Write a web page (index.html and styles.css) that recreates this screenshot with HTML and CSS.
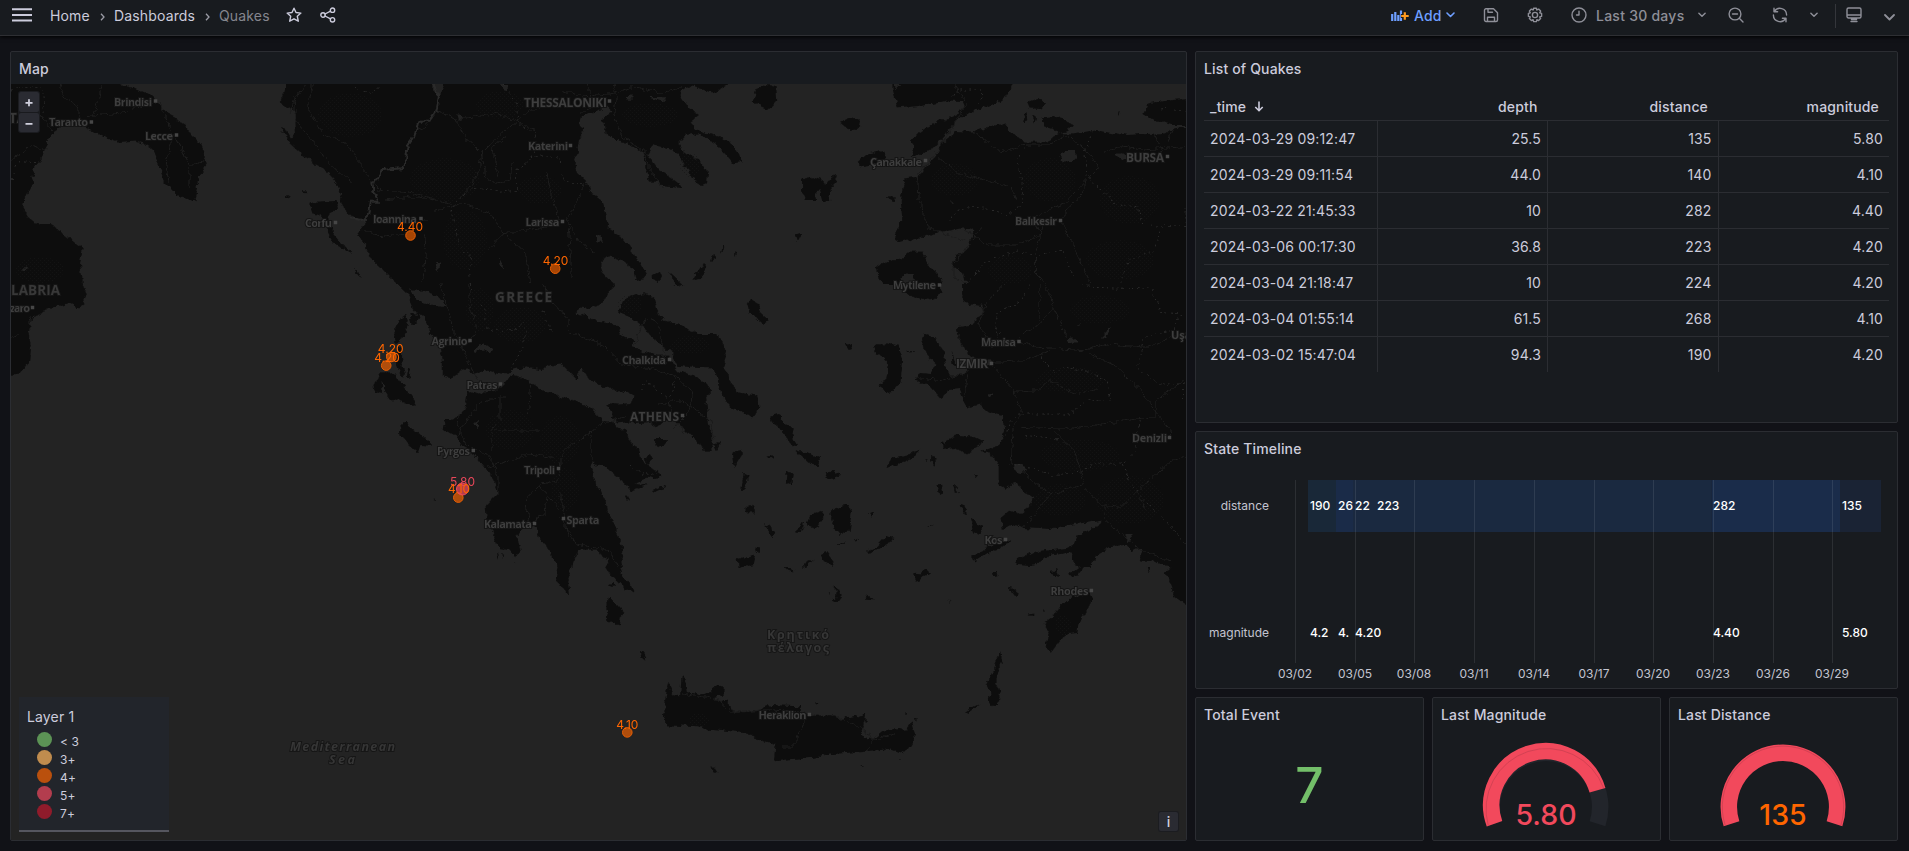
FILE: index.html
```html
<!DOCTYPE html>
<html lang="en">
<head>
<meta charset="utf-8">
<title>Quakes - Dashboards</title>
<link rel="stylesheet" href="styles.css">
</head>
<body>
<header class="topbar">
  <svg class="burger" width="20" height="14" viewBox="0 0 20 14"><path d="M0 1.2h20M0 7h20M0 12.5h20" stroke="currentColor" stroke-width="2"/></svg>
  <nav class="crumbs">
    <span class="c-home">Home</span><svg class="sep" width="5" height="8" viewBox="0 0 5 8"><path d="M1 .8 4 4 1 7.2"/></svg>
    <span class="c-dash">Dashboards</span><svg class="sep" width="5" height="8" viewBox="0 0 5 8"><path d="M1 .8 4 4 1 7.2"/></svg>
    <span class="current">Quakes</span>
  </nav>
  <svg class="ic star" width="16" height="16" viewBox="0 0 16 16"><path d="m8 1.2 2 4.3 4.9.6-3.6 3.2 1 4.9L8 11.8l-4.300 2.400 1-4.900L1.100 6.100 6 5.500z"/></svg>
  <svg class="ic share" width="16" height="16" viewBox="0 0 16 16"><circle cx="3" cy="8" r="2.200"/><circle cx="12.500" cy="3.200" r="2.200"/><circle cx="12.500" cy="12.800" r="2.200"/><path d="m5 7 5.500-2.800M5 9l5.500 2.800"/></svg>
  <div class="tools">
    <svg class="addicon" width="18" height="14" viewBox="0 0 18 14"><path d="M1.200 5v7M4.300 3v9M7.300 6v6M10 1.500V12" stroke="#6e9fff" stroke-width="2.200" fill="none"/><path d="M13.800 3v8M9.800 7h8" stroke="#181b1f" stroke-width="4"/><path d="M13.800 3.200v7.600M10.200 7h7.500" stroke="#ff9a1f" stroke-width="2.200"/></svg>
    <span class="add">Add</span>
    <svg class="chev blue" width="9" height="6" viewBox="0 0 9 6"><path d="m1 1 3.500 3.500L8 1"/></svg>
    <svg class="ic save" width="16" height="16" viewBox="0 0 16 16"><path d="M1.500 3.200a1.500 1.500 0 0 1 1.500-1.500h7.500l4 4v7.300a1.500 1.500 0 0 1-1.500 1.500H3A1.500 1.500 0 0 1 1.500 13zM4.500 14.500V10.200h7v4.300M5 1.700v3.500h4.500"/></svg>
    <svg class="ic gear" width="16" height="16" viewBox="0 0 16 16"><circle cx="8" cy="8" r="2.600"/><path d="m6.600 1.200h2.800l.5 1.800 1.700-.9 2 2-.9 1.700 1.900.6v2.900l-1.900.6.9 1.700-2 2-1.700-.9-.5 1.900H6.600l-.5-1.900-1.700.9-2-2 .9-1.700-1.900-.6V6.400l1.900-.6-.9-1.700 2-2 1.700.9z"/></svg>
    <svg class="ic clock" width="16" height="16" viewBox="0 0 16 16"><circle cx="8" cy="8" r="7"/><path d="M8 4.200V8H5.500"/></svg>
    <span class="range">Last 30 days</span>
    <svg class="chev c2" width="8" height="6" viewBox="0 0 9 6"><path d="m1 1 3.500 3.500L8 1"/></svg>
    <svg class="ic zoomout" width="16" height="16" viewBox="0 0 16 16"><circle cx="7" cy="7" r="5.900"/><path d="M4.500 7h5M11.300 11.300l3.700 3.700"/></svg>
    <svg class="ic refresh" width="16" height="16" viewBox="0 0 16 16"><path d="M2 1.200v3.600h3.600M2.300 4.600A6.600 6.600 0 0 1 14.600 8M14 14.800v-3.600h-3.600M13.700 11.400A6.600 6.600 0 0 1 1.400 8"/></svg>
    <svg class="chev c3" width="8" height="6" viewBox="0 0 9 6"><path d="m1 1 3.500 3.500L8 1"/></svg>
    <i class="divider"></i>
    <svg class="ic monitor" width="16" height="16" viewBox="0 0 16 16"><path d="M2.500 1h11a1.500 1.500 0 0 1 1.500 1.500v7a1.500 1.500 0 0 1-1.500 1.500h-11A1.500 1.500 0 0 1 1 9.500v-7A1.500 1.500 0 0 1 2.500 1zM1 8h14M5.500 11v1.500h5V11M5 14.500h6"/></svg>
    <svg class="chev c4" width="11" height="7" viewBox="0 0 11 7"><path d="m1 1 4.500 4.500L10 1"/></svg>
  </div>
</header>

<main class="dash">
  <section class="panel map-panel">
    <h2>Map</h2>
    <div class="map">
      <svg class="geo" viewBox="11 84 1175 756">
        <defs>
          <filter id="coast" filterUnits="userSpaceOnUse" x="0" y="70" width="1200" height="780">
            <feTurbulence type="fractalNoise" baseFrequency="0.16" numOctaves="2" seed="4"/>
            <feDisplacementMap in="SourceGraphic" scale="6" xChannelSelector="R" yChannelSelector="G"/>
          </filter>
          <pattern id="woods" width="4" height="4" patternUnits="userSpaceOnUse"><path d="M0 0h1v1H0zM2 2h1v1H2z" fill="#171717"/></pattern>
        </defs>
        <g filter="url(#coast)">
          <!-- north-west: Puglia, Albania, Epirus, Thessaly -->
          <svg x="0" y="0" width="560" height="284" viewBox="0 0 1372 852" preserveAspectRatio="none">
            <g class="land">
              <path d="M-20 220H260L298 252 330 268 362 280 385 305 400 330 430 355 455 378 470 405 490 430 497 460 506 490 497 515 488 530 482 560 476 604 462 598 440 590 420 565 400 540 395 515 385 480 378 450 360 432 330 425 290 428 262 410 225 395 205 380 150 380 130 398 115 430 100 480 84 500 80 530 84 550 62 590 54 612 66 650 84 670 122 672 160 705 202 748 196 790 200 852H-20z"/>
              <path d="M700 220V252L697 280 688 300 700 325 718 320 724 350 725 400 714 415 700 390 686 385 700 405 712 430 740 462 770 490 800 515 820 540 838 580 835 605 850 640 870 655 895 662 885 690 878 705 895 735 905 770 935 805 955 830 975 852H1380V220z"/>
              <path d="M760 612 775 605 825 603 828 625 808 640 803 655 815 690 818 705 840 735 865 758 845 750 815 728 805 700 800 670 785 645 765 640zM698 586l8-4 6 5-6 5zM742 574h8l-2 6zM868 806l8 8 10 20-12-12z"/>
            </g>
            <path class="sea" d="M1060 252h28l-5 22-12 15-13-20zM1118 340l15 2-2 18-9-2zM1225 252h20l-3 25-10-5zM50 810l15-8 5 5-18 10zM1065 790l12-8-4 40zM1222 770l12 20 1 15-8-10z"/>
            <g class="road">
              <path d="M150 252 155 290 190 320 192 350M250 252l-10 50-15 50M390 305l35 105-20 80 10 60M430 410l35 85 35-10M465 495v70M210 350l80-10 90-32M130 390l-30-40-40-10-10-60M27 480l50-40 40 10M720 290l5 70 40 60 40 70 60 60M750 252l-30 50-10 40M765 252l-10 80 35 70 60 30 60 110 25 30"/>
              <path d="M1075 330l-40 60-15-10M1075 330l40 30 30 60 35 40-5 50-30 60-35 50-50 15M1180 460l50-60 70-70 75-20M1180 460l10 70 20 20 40-10 5-50M1110 620l30-10 60 30 35 60 110-20M1235 700l-40 50M1235 700l55 60 10 90M890 690l40 20 60-10 20-30 40-10M1040 700l5 60-10 90M1110 360l110-20 90 50M920 570l80 5 60 20M1340 520l10 60 20 80M940 600l80-10 90 20M1240 410l-35 30 15 90"/>
            </g>
            <g class="prov"><path d="M27 270 40 262 100 262 108 290 105 350 118 370M30 540l15-55 45 3M860 252l20 20 30 5 30-22M1235 252l30 60 5 60 40 25 0 60-20 30-25 20v70l-50-5-60-8-35 40-15 30 20 100 30 40-5 70M1300 470l60 0 30 40 20 40"/></g>
            <path class="border" d="M1060 252 1075 290 1070 330 1050 365 1025 365 1015 410 998 440 995 480 985 505 935 510 925 540 912 545 915 575 928 605 908 605 905 640 890 660 860 655"/>
          </svg>
          <!-- north-east: Chalkidiki, Thrace, Marmara, Lesbos -->
          <svg x="560" y="0" width="640" height="284" viewBox="0 0 1568 852" preserveAspectRatio="none">
            <g class="land">
              <path d="M0 220H440L412 252 395 268 372 277 350 270 325 255 298 270 295 290 315 320 340 345 320 365 330 385 362 402 385 408 415 425 440 465 445 487 425 490 400 455 382 435 360 415 340 403 305 408 292 425 300 452 325 468 345 485 362 520 360 550 345 555 322 535 315 510 300 485 290 460 270 445 230 437 213 462 240 505 280 540 302 563 260 560 240 545 218 545 210 480 205 455 140 420 112 400 110 370 98 358 128 335 118 312 105 325 70 345 50 352 48 375 60 385 45 430 37 480 42 520 70 552 75 575 105 605 112 650 120 685 150 710 170 740 195 790 212 820 205 838 185 840 182 815 165 785 145 782 120 765 98 790 105 820 125 845 135 852H0z"/>
              <path d="M480 270 500 254 530 258 532 300 508 330 475 305zM685 370l25-18 27 10-2 18-20 12zM593 540l19-10 28 10 10 15 15-25 15-5-5 25-15 20 2 35h-17l-5-35-15 10 3 20h-28l-7-30zM732 485l23-25 43-8-3 23-35 23-20 2zM798 592h24l-2 16zM578 700l15-4-3 12-8 14zM352 790l4 15-12 32-22 3zM268 815l32 37h-18zM225 825l20-8 5 10-10 18-15-10zM375 760l7 15-12 10zM395 738l5 5-7 18zM430 757l3 3-3 12z"/>
              <path d="M815 220V265L822 300 825 322 880 318 960 302 985 303 990 325 960 350 900 380 858 420 868 440 862 470 885 460 915 445 945 405 960 380 980 350 1020 330 1070 310 1095 285 1110 252V220z"/>
              <path d="M1145 305 1170 297 1190 310 1180 328 1150 325zM1180 352l40-4 37 24-12 20-23 6-34-23zM1135 343l10-3 2 20-8 6zM1157 345l12 12-6 12zM1368 335l5-2-2 18zM1427 345 1445 310 1500 300 1600 292V375H1500L1470 365zM772 800 800 788 845 770 850 755 890 755 895 775 900 795 925 820 940 852H790z"/>
              <path d="M845 535 875 532 895 500 920 470 935 430 970 393 1010 395 1045 385 1090 368 1100 395 1140 425 1190 425 1222 400 1260 400 1310 392 1390 405 1480 400 1505 385 1600 372V852H1000L985 820 962 795 968 770 1000 745 1015 690 990 685 930 695 880 715 830 725 820 715 838 650 835 600z"/>
            </g>
            <path class="sea" d="M1222 478l13-28h27l3 32-35 3zM1355 462l25-2 15 14-15 6zM835 840l8-18 22-4 10 34h-40zM216 290l45 2-10 15zM158 288l20-2 3 12-15 2zM90 702l12 5 3 20-14-8zM955 595l8 15-5-2zM820 255l14 0-12 14z"/>
            <g class="road">
              <path d="M130 252l8 40-6 50 20 70 55 40 15 60 30 50M70 252l5 70-30 20M0 270l60 20 70-10 50-20 70 20 50-20M60 550l-20 60-25 50 30 60 40 40M20 680l10 150M965 252l30 60-30 60-40 80-50 70 5 80 20 80 90 40M925 470l50 50 130 40 15 40M1010 395l70 60 60-20 60 0 40-30 60 60 20 40-50 60-30 40-80 50 20 50-60 30-70 0-60-45M1290 520l-10 60-50 70M1330 460l40-20 60 10 100-10M1455 400l20 50-10 20M1228 665l30 70 20 60 20 57M1185 670l-20 90 0 60 25 32M1035 680l-70 110 0 40 30 20M1500 390l-20 50"/>
            </g>
            <g class="prov"><path d="M0 520l25 30 40 0M965 290l10-20 60 0-10 50M1305 395l-20 60 10 80 70 80 50 5 10 50 50 10-20 70-60 30-20 50 0 22M1140 435l-20 50 15 60-5 70-30 30-90-30-50 30-10 40M1000 850l40-60 80-40 50 20 60-20 30 90M1470 330l30-5 34 10M1534 620v60l-65-5"/></g>
          </svg>
          <!-- west: Calabria, Ionian islands, Peloponnese -->
          <svg x="0" y="284" width="560" height="283" viewBox="0 0 1372 849" preserveAspectRatio="none">
            <g class="land">
              <path d="M-20 0H200L212 30 205 60 195 70 170 60 120 75 80 100 68 140 76 190 74 230 55 262 27 276H-20z"/>
              <path d="M975 0 1000 30 1010 70 1020 85 1040 95 1048 130 1065 165 1080 190 1085 230 1085 275 1110 280 1130 260 1145 252 1155 270 1195 260 1235 270 1250 258 1290 250 1330 255 1372 235V0z"/>
              <path d="M965 150 975 110 995 90 1000 120 990 160 970 178zM1003 88l27 2-8 28-14 4zM975 185l10 5 0 40 8 50-13-10-10-40zM945 265l20 5 20 30 30 45 3 17-18-2-25-15-20 5-10-30-10-30 2 35-17 5-5-20 10-25 3-20zM1000 255l6 4-3 30-5-10zM980 430l15-20 10 20 35 30 20 25-25-2-10 25-25-28-18-25zM1062 645l4-2 2 4z"/>
              <path d="M1145 320 1180 330 1215 320 1240 290 1250 272 1280 278 1310 305 1350 325 1380 342V849H1368L1340 790 1320 760 1318 735 1300 720 1275 735 1268 760 1275 800 1262 820 1245 798 1225 795 1215 780 1208 735 1192 705 1190 665 1218 630 1210 590 1190 555 1160 510 1130 485 1120 455 1087 440 1090 408 1105 408 1130 390 1142 360z"/>
              <path d="M1218 800l4 5-3 20zM1230 808l5 4-1 16zM1258 832l4 0-1 6z"/>
            </g>
            <path class="sea" d="M1005 15l35 5 40 20 15 30-35-5-45-20zM1163 196l22-18 23 17-8 10-15-9-20 8zM1160 420l15-10-4 10 6 4-8 8z"/>
            <g class="road"><path d="M1080 0l20 90 15 60 35 90 20 50M1150 0l0 60 20 80-25 40M1140 370l-20 40 20 75 60 30 20 60 0 60M1120 455l30-60 30-40 60-20M1225 330l0 80-20 30 0 60M1300 300l-5 90M1372 530l-5 60-45 15-35 40 10 70M1320 605l60 80M1210 440l110 0M1340 640l-5 50-60 40M75 100l-5 40M27 160l20-10M1330 0l20 50 22 30M1195 550l100-40 60 10"/></g>
            <g class="prov"><path d="M1155 0l0 40 30 30 5 60 20 10 50 0 20-25 10 20-10 60-25 50-10 20M1330 80l20 60"/></g>
          </svg>
          <!-- east: Attica, Euboea, Cyclades, Anatolia -->
          <svg x="560" y="284" width="640" height="283" viewBox="0 0 1568 849" preserveAspectRatio="none">
            <g class="land">
              <path d="M0 0H135L118 30 105 55 75 72 45 70 38 85 60 95 90 110 120 115 145 130 150 155 182 168 175 185 205 205 240 215 268 215 275 240 290 262 330 275 355 295 370 325 358 340 360 370 365 420 375 470 370 500 350 500 330 460 312 448 285 410 240 415 185 420 170 412 140 415 125 400 130 385 110 360 140 362 175 360 185 335 150 320 110 310 70 285 55 250 40 285 20 260 0 235z"/>
              <path d="M0 340 30 345 80 375 105 408 130 410 138 430 165 440 175 480 190 490 195 520 215 540 250 575 235 585 215 578 185 600 212 602 175 625 155 590 135 570 115 550 90 540 78 530 75 550 85 595 112 650 115 685 130 710 155 800 150 830 152 849H112L120 825 105 820 92 797 45 797 35 820 30 849H0z"/>
              <path d="M150 62 165 40 205 28 230 40 235 75 255 110 300 125 340 150 385 150 395 175 408 205 400 250 415 290 430 325 487 335 488 370 475 400 440 380 420 375 405 345 390 310 385 280 370 250 320 248 285 245 275 205 240 180 215 140 175 100 142 88z"/>
              <path d="M230 465h30l-5 15-15 13zM207 520l13-10 8 15-13 15zM225 418l35-10-25 19zM220 626l15-12 28-8-20 15zM160 635l8 0 3 15zM378 478l14-4-8 30zM460 60l8-15 17 15 5 25 22 25-12 12-15-17-23-20zM700 185l15-7 3 17-10 3zM770 190l30-12 30 7 8 45-3 60-10 15-17 25-30-30 22-15 5-40-10-25-20-10zM815 0h115l5 20-10 20-25 8-30-8-30-18zM275 0h30l-12 7z"/>
              <path d="M515 392l20-4 15 32 22 10-2 25 10 32-10 3-25-50-25-25zM577 498l33 12 27 10-5 28-22-13zM650 570l20-12 18 17-33 10zM422 510l23-13 3 13-23 38zM450 570l15 5-10 30-12 20zM555 560l17 10-2 30-17-5zM455 670l15-10 8 25h-23zM503 717l25 28-10 15zM433 822l12 3 33-10-3 25-40 8zM478 788l12 2 0 20-10-5zM610 700l30-20 5 25-20 30-20-15zM662 685l38-25 15 15-5 65-25 15-17-35zM750 800l25-10 25-33 20 5-30 28-35 18zM640 810l10-8 20 28-5 18-20-18zM605 832l18-6-20 23h-8zM590 720l10-3-12 30-12-2zM508 518l14-2-2 8zM755 688l12-4-2 14zM718 762l15 8-10 2zM680 785l20-15-8 12z"/>
              <path d="M935 480l30-25 45 3 30 12-20 20-25 20-30-18-25 3zM800 552l15-32 35-5 35-20-15 20-35 25zM910 512l10 15-6 18-4-15zM895 530l8-4-2 8zM925 600l8 0 4 30-8 5zM965 598l12 30-8-6zM978 660l12 2 10 30-10-4zM1005 705l30 25-5 20-18-5zM1015 570h12l-6 8zM1010 815l35-25 45-22 15 7-45 30-40 20 0 13zM848 198l20 8-8 2zM960 200l6 30 4 15-8-5zM900 728l15-3-12 5z"/>
              <path d="M985 0V30L990 60 1035 65 1040 85 1020 100 1010 125 970 130 975 165 990 190 1005 220 1060 230 1060 245 1000 255 980 275 955 275 945 240 940 200 915 160 890 152 885 180 900 215 920 240 912 270 880 268 870 290 900 300 935 345 950 315 980 312 985 335 995 370 1030 362 1050 385 1085 392 1088 440 1080 480 1060 492 1030 500 1060 515 1075 540 1075 600 1090 615 1120 595 1135 625 1160 640 1150 670 1130 690 1100 680 1082 700 1085 735 1120 720 1135 732 1200 735 1260 720 1325 710 1320 725 1265 755 1260 780 1240 795 1180 800 1120 825 1115 840 1160 842 1200 815 1250 805 1265 849 1300 849 1310 820 1345 790 1390 785 1400 800 1425 790 1420 830 1450 830 1490 849H1600V0z"/>
            </g>
            <path class="sea" d="M1110 545l20-2 15 15-20 8-12-5zM1238 165l25-2 5 12-22 3zM1325 160l25-30-12 32zM1045 335l18-10-10 15zM1385 750l20 0-15 25zM1265 120l15-2-10 4z"/>
            <g class="road">
              <path d="M1085 0l-40 60-20 60 35 70 50-20 70 20 100 10 60-20 100 10 55-30 60-20M1190 0l20 70-35 50-50 40M1175 110V0M1210 70l30 90M1060 235l80-5 60-30M1060 245l50 70 20 70-20 50-5 110M1130 430l100 5 70-10 140-25 20 0 0-50 70-60M1290 205l70 40 60 70 40 70 40 60-20 30M1110 325l60-5 30-30 60 40 60-15M1210 440l50 60 25 100-80 30-50-40-20-30M1205 630l-70 100M1285 610l50 60 0 40 90 90 70 30M1415 620l80-90 40-10M1415 620l-40 50-40-5M1415 620l20 60M870 280l60 10 60-20M0 75l20 30 0 40 90 40 40 60 80 10 50 20 45 50-10 60-40 50M0 620l20 140M0 550l10-50 60-50 40-40M75 370l35 45 60-20M240 360l60-10 70 60 5 60M265 360l40 90M75 450l0 80M260 240l-20-120-30-20-30 90M0 700l40 80 80 20 25 49M1000 260l-10 80"/>
            </g>
            <g class="prov"><path d="M1150 0l-20 50-60 40 0 70 10-20M1280 0l20 10 150 5 20 70 50 5-20 50-70 20-15 90 50 50 70 0M1180 220l30 50 30-20 50 10 50 30 10 60-60 0-40 40-130 0-20 30-10 40M1140 455l50 5 30 5M1110 545l60 10 40 20 70-15 30-20 70 0 30-40 10-100M1380 540l20 60 40 60 60 70 30 50M200 320l10-30 20 20 30 30 20-20v-40M170 545l30 25 40 0M1525 300v50"/></g>
          </svg>
          <!-- south-west -->
          <svg x="0" y="567" width="560" height="283" viewBox="0 0 1372 849" preserveAspectRatio="none">
            <path class="land" d="M1368 0h10v60l-15-18z"/>
          </svg>
          <!-- south: Crete, Rhodes, Karpathos -->
          <svg x="560" y="567" width="640" height="283" viewBox="0 0 1568 849" preserveAspectRatio="none">
            <g class="land">
              <path d="M0 0H30L24 20 20 45 22 88 10 65 0 55zM110 0h38l5 30 15 15 12 25-20 2-15-22-20-25zM122 56l8-8 4 12zM122 92l18 23 18 23-10 12-1 25-27-10-7-15 5-20-5-20zM196 252l8 6 5 20-8-8z"/>
              <path d="M258 398 265 345 270 360 275 385 295 388 297 340 302 325 308 350 310 375 345 382 370 378 375 360 390 353 403 370 398 385 375 390 395 405 412 400 417 430 430 437 485 432 510 415 590 418 590 435 610 443 665 445 690 458 750 442 748 460 738 485 745 510 765 518 790 492 830 482 845 492 858 475 863 460 867 490 870 520 855 545 835 556 800 545 770 553 700 558 660 560 625 572 560 577 525 580 528 530 490 520 450 495 365 488 345 478 265 475 253 460 258 430z"/>
              <path d="M368 602l12 0 8 14-5 5zM625 405l10 0-4 6zM843 435l4 0-1 10zM870 455l6-6-4 15zM833 573l5 2-3 4zM735 597h8v3zM1078 255l4 20-12 45-5 30 10 20 5 25-20 23-10-18 5-25-12-23 17-32 10-40zM995 435l15-15 20-8-30 28z"/>
              <path d="M1300 75 1305 95 1285 145 1270 165 1268 198 1240 200 1200 260 1190 240 1198 190 1185 170 1205 150 1230 110 1270 85zM1145 142l20-2-2 6h-16zM1183 128l5 0-2 8zM1095 60l12 2 20 22-12 6zM1058 14l14-2 2 16-14 2zM1203 15l15-8 4 25-12-5zM1245 18l20-5 12-13h6l-12 25-22 3zM865 20l20 2 8-16 14 14-20 8-6 20-10-5zM745 98l10-13 17 15zM668 60l14 8 8 24-10 15-14-6 14-8-4-22zM656 72l4 0 0 12zM955 98l4 4-3 5zM550 0h12l10 16-10-2zM1438 0h10l-8 16zM1480 15 1500 0H1600V150L1534 118 1505 90 1495 40zM595 0l8 0-5 4z"/>
            </g>
            <g class="road"><path d="M300 378l90 20 25 38 100-8 90 12 75 10 70 40 15 30 60-20M600 450l-20 70-15 20-25 0M765 518l-15 35"/></g>
          </svg>
        </g>
        <g class="woods">
          <ellipse cx="350" cy="115" rx="32" ry="22"/><ellipse cx="445" cy="180" rx="35" ry="22"/><ellipse cx="465" cy="240" rx="22" ry="30"/><ellipse cx="540" cy="190" rx="22" ry="14"/><ellipse cx="500" cy="105" rx="24" ry="14"/><ellipse cx="650" cy="115" rx="28" ry="12"/><ellipse cx="690" cy="165" rx="10" ry="12"/>
          <ellipse cx="955" cy="180" rx="24" ry="16"/><ellipse cx="1050" cy="180" rx="26" ry="22"/><ellipse cx="1130" cy="200" rx="30" ry="24"/><ellipse cx="1120" cy="260" rx="34" ry="20"/><ellipse cx="1010" cy="270" rx="22" ry="14"/><ellipse cx="1100" cy="310" rx="30" ry="14"/><ellipse cx="1070" cy="380" rx="34" ry="13"/><ellipse cx="1080" cy="455" rx="40" ry="16"/><ellipse cx="1130" cy="500" rx="34" ry="24"/><ellipse cx="1060" cy="500" rx="26" ry="16"/>
          <ellipse cx="520" cy="325" rx="26" ry="18"/><ellipse cx="480" cy="310" rx="14" ry="22"/><ellipse cx="630" cy="305" rx="12" ry="10"/><ellipse cx="690" cy="345" rx="20" ry="9"/><ellipse cx="510" cy="430" rx="24" ry="20"/><ellipse cx="560" cy="440" rx="20" ry="24"/><ellipse cx="565" cy="490" rx="14" ry="22"/><ellipse cx="40" cy="270" rx="24" ry="13"/><ellipse cx="699" cy="720" rx="10" ry="7"/><ellipse cx="1063" cy="625" rx="8" ry="10"/>
        </g>
        <g class="dots"><path d="M155.500 101h0M91.400 122h0M176.500 135h0M609.500 101h0M570.500 145.500h0M335.500 222.500h0M421 218.500h0M562.500 221.500h0M32.500 307.500h0M470 340.500h0M500.500 384h0M473.300 450.500h0M558.500 468.500h0M534.500 523.500h0M563.500 518.500h0M669.500 359.500h0M682.500 415.500h0M925.500 160.500h0M1167.500 156.500h0M1060.500 220.500h0M939.500 285h0M1019 341.500h0M991.500 363.500h0M1169.500 437.500h0M1005.500 539.500h0M1091.400 590.500h0M809.400 714.500h0"/></g>
        <g class="places">
          <text x="114" y="106" textLength="38">Brindisi</text><text x="49" y="126" textLength="39">Taranto</text><text x="145" y="139.500" textLength="28">Lecce</text>
          <text class="big" x="9" y="123">TA</text>
          <text class="city" x="524" y="106.500" textLength="83">THESSALONIKI</text><text x="528" y="150" textLength="40">Katerini</text>
          <text x="305" y="227" textLength="27">Corfu</text><text x="373" y="222.500" textLength="44">Ioannina</text><text x="525.500" y="225.500" textLength="34">Larissa</text>
          <text class="big" x="11" y="295" textLength="49">LABRIA</text><text x="10" y="311.500" textLength="20">zaro</text>
          <text class="big" x="495" y="302" textLength="57">GREECE</text>
          <text x="431.500" y="345" textLength="36">Agrinio</text><text x="466.500" y="388.500" textLength="31">Patras</text><text x="437" y="455" textLength="33">Pyrgos</text>
          <text x="524" y="473.500" textLength="31">Tripoli</text><text x="484" y="527.500" textLength="48">Kalamata</text><text x="566.500" y="523.500" textLength="33">Sparta</text>
          <text x="622" y="363.500" textLength="44">Chalkida</text><text class="city" x="630" y="420.500" textLength="49">ATHENS</text>
          <text x="870" y="166" textLength="52">Çanakkale</text><text class="city" x="1126" y="162" textLength="38">BURSA</text><text x="1015" y="224.500" textLength="42">Balıkesir</text>
          <text x="893" y="289" textLength="43">Mytilene</text><text x="981" y="346" textLength="35">Manisa</text><text class="city" x="956" y="368" textLength="32">IZMIR</text>
          <text x="1171" y="339">Uşak</text><text x="1132" y="442" textLength="35">Denizli</text><text x="984.500" y="543.500" textLength="18">Kos</text>
          <text x="1050.500" y="595" textLength="38">Rhodes</text><text x="758.500" y="719" textLength="48">Heraklion</text>
          <text class="water" x="767" y="639" textLength="62">Κρητικό</text><text class="water" x="767" y="652" textLength="62">πέλαγος</text>
          <text class="water it" x="290" y="751" textLength="105">Mediterranean</text><text class="water it" x="329" y="763.500" textLength="26">Sea</text>
        </g>
        <g class="quakes">
          <circle cx="410.500" cy="235.500" r="4.800"/><circle cx="555.200" cy="268.700" r="4.800"/><circle cx="391.300" cy="357" r="4.800"/><circle cx="386.200" cy="365.600" r="4.800"/>
          <circle cx="458.300" cy="497.600" r="4.800"/><circle class="red" cx="462.500" cy="489" r="6"/><circle cx="627.300" cy="732.400" r="4.800"/>
          <text x="410" y="231">4.40</text><text x="555.500" y="265">4.20</text><text x="390.700" y="353">4.20</text><text x="387" y="362.200">4.20</text>
          <text class="redt" x="462.500" y="486">5.80</text><text x="459" y="493.200">4.10</text><text x="627.300" y="729">4.10</text>
        </g>
      </svg>
      <div class="zoomctl"><button>+</button><button>−</button></div>
      <div class="legend">
        <p>Layer 1</p>
        <ul><li><i class="d1"></i>&lt; 3</li><li><i class="d2"></i>3+</li><li><i class="d3"></i>4+</li><li><i class="d4"></i>5+</li><li><i class="d5"></i>7+</li></ul>
      </div>
      <button class="info">i</button>
    </div>
  </section>

  <div class="side">
    <section class="panel list">
      <h2>List of Quakes</h2>
      <table>
        <thead><tr><th>_time <svg width="10" height="11" viewBox="0 0 10 11"><path d="M5 .5v9M1.300 6 5 9.700 8.700 6"/></svg></th><th>depth</th><th>distance</th><th>magnitude</th></tr></thead>
        <tbody>
          <tr><td>2024-03-29 09:12:47</td><td>25.5</td><td>135</td><td>5.80</td></tr>
          <tr><td>2024-03-29 09:11:54</td><td>44.0</td><td>140</td><td>4.10</td></tr>
          <tr><td>2024-03-22 21:45:33</td><td>10</td><td>282</td><td>4.40</td></tr>
          <tr><td>2024-03-06 00:17:30</td><td>36.8</td><td>223</td><td>4.20</td></tr>
          <tr><td>2024-03-04 21:18:47</td><td>10</td><td>224</td><td>4.20</td></tr>
          <tr><td>2024-03-04 01:55:14</td><td>61.5</td><td>268</td><td>4.10</td></tr>
          <tr><td>2024-03-02 15:47:04</td><td>94.3</td><td>190</td><td>4.20</td></tr>
        </tbody>
      </table>
    </section>

    <section class="panel timeline">
      <h2>State Timeline</h2>
      <svg class="chart" width="701" height="220" viewBox="1196 464 701 220">
        <rect x="1308" y="480" width="28" height="52" fill="#192838"/><rect x="1336" y="480" width="17" height="52" fill="#1a2b48"/><rect x="1353" y="480" width="358.500" height="52" fill="#1a2940"/><rect x="1711.500" y="480" width="128.500" height="52" fill="#1a2c4a"/><rect x="1840" y="480" width="41" height="52" fill="#1a2334"/>
        <path class="grid" d="M1295.500 480v183M1355.500 480v183M1414.500 480v183M1474.500 480v183M1534.500 480v183M1594.500 480v183M1653.500 480v183M1713.500 480v183M1773.500 480v183M1832.500 480v183"/>
        <g class="val"><text x="1310" y="510">190</text><text x="1338" y="510">26</text><text x="1355" y="510">22</text><text x="1377" y="510">223</text><text x="1713" y="510">282</text><text x="1842" y="510">135</text>
        <text x="1310" y="637">4.2</text><text x="1338" y="637">4.</text><text x="1355" y="637">4.20</text><text x="1713" y="637">4.40</text><text x="1842" y="637">5.80</text></g>
        <g class="ylab"><text x="1269" y="510">distance</text><text x="1269" y="637">magnitude</text></g>
        <g class="xlab"><text x="1295" y="678">03/02</text><text x="1355" y="678">03/05</text><text x="1414" y="678">03/08</text><text x="1474" y="678">03/11</text><text x="1534" y="678">03/14</text><text x="1594" y="678">03/17</text><text x="1653" y="678">03/20</text><text x="1713" y="678">03/23</text><text x="1773" y="678">03/26</text><text x="1832" y="678">03/29</text></g>
      </svg>
    </section>

    <div class="stats">
      <section class="panel stat"><h2>Total Event</h2><div class="big7">7</div></section>
      <section class="panel stat"><h2>Last Magnitude</h2>
        <svg class="gauge" width="140" height="100" viewBox="-70 -70 140 100">
          <path class="track" d="M-51.500 16.800A54.200 54.200 0 1 1 51.500 16.800"/>
          <path class="fill" d="M-51.500 16.800A54.200 54.200 0 1 1 51.500 -16.800"/>
          <path class="ring" d="M-57.700 18.700A60.700 60.700 0 0 1 57.700 -18.700"/>
          <text x="0" y="17.500" fill="#f2495c">5.80</text>
        </svg>
      </section>
      <section class="panel stat"><h2>Last Distance</h2>
        <svg class="gauge" width="140" height="100" viewBox="-70 -70 140 100">
          <path class="fill" d="M-51.500 16.800A54.200 54.200 0 1 1 51.500 16.800"/>
          <path class="ring" d="M-57.700 18.700A60.700 60.700 0 1 1 57.700 18.700"/>
          <text x="0" y="17.500" fill="#ff6600">135</text>
        </svg>
      </section>
    </div>
  </div>
</main>
</body>
</html>
```
FILE: styles.css
```css
* { box-sizing: border-box; }
body { margin: 0; width: 1909px; height: 851px; overflow: hidden; background: #111217; color: #ccccdc; font: 14px/22px Inter, "Liberation Sans", sans-serif; letter-spacing: .15px; }
svg { display: block; flex: none; }
h2 { margin: 0; font-size: 14px; font-weight: 500; line-height: 22px; letter-spacing: .15px; }
button { font-family: inherit; padding: 0; }

/* top bar */
.topbar { height: 36px; background: #181b1f; border-bottom: 1px solid #2e2f33; box-shadow: 0 1px 4px #000; display: flex; align-items: center; padding: 0 14px 4px 12px; position: relative; }
.burger { margin-top: -1px; }
.crumbs { display: flex; align-items: center; margin-left: 18px; }
.crumbs span { line-height: 20px; }
.c-home { width: 50px; }
.c-dash { width: 91px; margin-left: 9px; }
.current { width: 67px; margin-left: 9px; color: #85868e; }
.sep { fill: none; stroke: #9b9ca6; stroke-width: 1.300; margin-top: 2px; }
.ic { fill: none; stroke: currentColor; stroke-width: 1.400; stroke-linejoin: round; stroke-linecap: round; margin-top: -1px; }
.share { margin-left: 18px; }
.tools { display: flex; align-items: center; margin-left: auto; color: #8e8f98; height: 31px; }
.add { color: #6e9fff; font-weight: 500; width: 31px; margin-left: 5px; margin-right: 1px; }
.chev { fill: none; stroke: currentColor; stroke-width: 1.600; stroke-linecap: round; stroke-linejoin: round; margin-top: -1px; }
.blue { color: #6e9fff; }
.save { margin-left: 28px; }
.gear { margin-left: 28px; }
.clock { margin-left: 28px; }
.range { margin-left: 9px; width: 102px; font-weight: 500; letter-spacing: .25px; white-space: nowrap; }
.zoomout { margin-left: 22px; }
.refresh { margin-left: 28px; }
.c3 { margin-left: 22px; }
.divider { width: 1px; height: 24px; background: #34363b; margin-left: 17px; }
.monitor { margin-left: 10px; }
.c4 { margin-left: 22px; margin-top: 3px; stroke-width: 1.800; }

/* panels */
.dash { display: grid; grid-template-columns: 1177px 703px; column-gap: 8px; padding: 15px 0 0 10px; }
.panel { background: #181b1f; border: 1px solid #2b2d32; border-radius: 2px; overflow: hidden; }
.panel h2 { padding: 6px 8px 4px; }
.map-panel { height: 790px; }
.map { position: relative; height: 756px; background: #232323; }
.geo { width: 1175px; height: 756px; }
.land { fill: #0b0b0b; }
.sea { fill: #232323; }
.road { fill: none; stroke: #1c1c1c; }
.prov { fill: none; stroke: #2a2a2a; stroke-dasharray: 2 3; }
.border { fill: none; stroke: #2b2b2b; stroke-width: 2; }
.road path, .prov path, .border { vector-effect: non-scaling-stroke; }
.woods { fill: url(#woods); opacity: .7; }
.dots { stroke: #464646; stroke-width: 3.500; stroke-linecap: square; }
.places { font: 700 11px "Open Sans", "Noto Sans", sans-serif; letter-spacing: 0; fill: #3e3e3e; stroke: #151515; stroke-width: 2px; paint-order: stroke; }
.places .city { font-size: 12px; }
.places .big { font-size: 13.500px; fill: #383838; }
.places .water { font-size: 12.500px; fill: #363636; stroke: #161616; stroke-width: 2px; }
.places .it { font-style: italic; }
.quakes { fill: #ff6600; fill-opacity: 1; font-size: 12px; text-anchor: middle; letter-spacing: 0; }
.quakes circle { fill: #fa6400; fill-opacity: .65; stroke: #e85f04; stroke-width: 1; }
.quakes .red { fill: #f2495c; fill-opacity: .7; stroke: #f2495c; }
.quakes .redt { fill: #e8475a; }
.zoomctl { position: absolute; left: 8px; top: 8px; width: 20px; height: 40px; display: grid; gap: 1px; background: #191a1e; border-radius: 2px; box-shadow: 0 0 0 1px #1b1c20; }
.zoomctl button, .info { border: 0; background: #2a2b32; color: #d0d0dd; border-radius: 2px; font-size: 14px; font-weight: 700; line-height: 17px; }
.info { position: absolute; right: 8px; bottom: 9px; width: 19px; height: 19px; font-weight: 500; line-height: 19px; box-shadow: 0 0 0 1px #1b1c20; }
.legend { position: absolute; left: 8px; bottom: 8px; width: 150px; height: 135px; background: #22252b; border-bottom: 2px solid #55565f; padding: 9px 8px 8px; }
.legend p { margin: 0; line-height: 22px; }
.legend ul { margin: 4px 0 0; padding: 0 0 0 10px; list-style: none; font-size: 12px; }
.legend li { height: 18px; display: flex; line-height: 19px; align-items: flex-start; }
.legend i { width: 15px; height: 15px; border-radius: 50%; margin-right: 8px; }
.d1 { background: #5c9355; }
.d2 { background: #c08c4e; }
.d3 { background: #ba500d; }
.d4 { background: #b33d4e; }
.d5 { background: #901b2b; }

/* quake table */
.side { display: grid; grid-template-rows: 372px 258px 144px; row-gap: 8px; }
table { border-collapse: collapse; table-layout: fixed; width: 685px; margin: 1px 0 0 8px; }
th { height: 35px; font-weight: 500; text-align: right; padding: 9px 10px 0 6px; border-bottom: 1px solid #2b2d32; }
th:first-child { width: 173px; }
th:nth-child(2), th:nth-child(3) { width: 170.500px; }
th:first-child, td:first-child { text-align: left; }
th svg { display: inline-block; margin-left: 4px; fill: none; stroke: currentColor; stroke-width: 1.600; }
td { height: 36px; text-align: right; padding: 2px 6px 0; border-right: 1px solid #2b2d32; border-bottom: 1px solid #2b2d32; }
td:last-child { border-right: 0; }
tbody tr:last-child td { border-bottom: 0; }

/* state timeline */
.grid { stroke: #fff; stroke-opacity: .09; }
.chart { font-size: 12px; letter-spacing: 0; fill: #c3c4d0; }
.val { fill: #fff; font-weight: 500; }
.ylab { text-anchor: end; }
.xlab { text-anchor: middle; }

/* stats */
.stats { display: grid; grid-template-columns: 229px 229px 229px; column-gap: 8px; }
.big7 { color: #73bf69; font-size: 49.500px; font-weight: 500; text-align: center; line-height: 60px; margin-top: 25px; }
.gauge { margin: 7px 0 0 43px; }
.gauge path { fill: none; stroke-width: 16.500; }
.gauge .track { stroke: #22252b; }
.gauge .fill { stroke: #f2495c; }
.gauge path.ring { stroke: #b53a4a; stroke-width: .5; }
.gauge text { font-size: 28.500px; font-weight: 500; text-anchor: middle; letter-spacing: 0; }
```
